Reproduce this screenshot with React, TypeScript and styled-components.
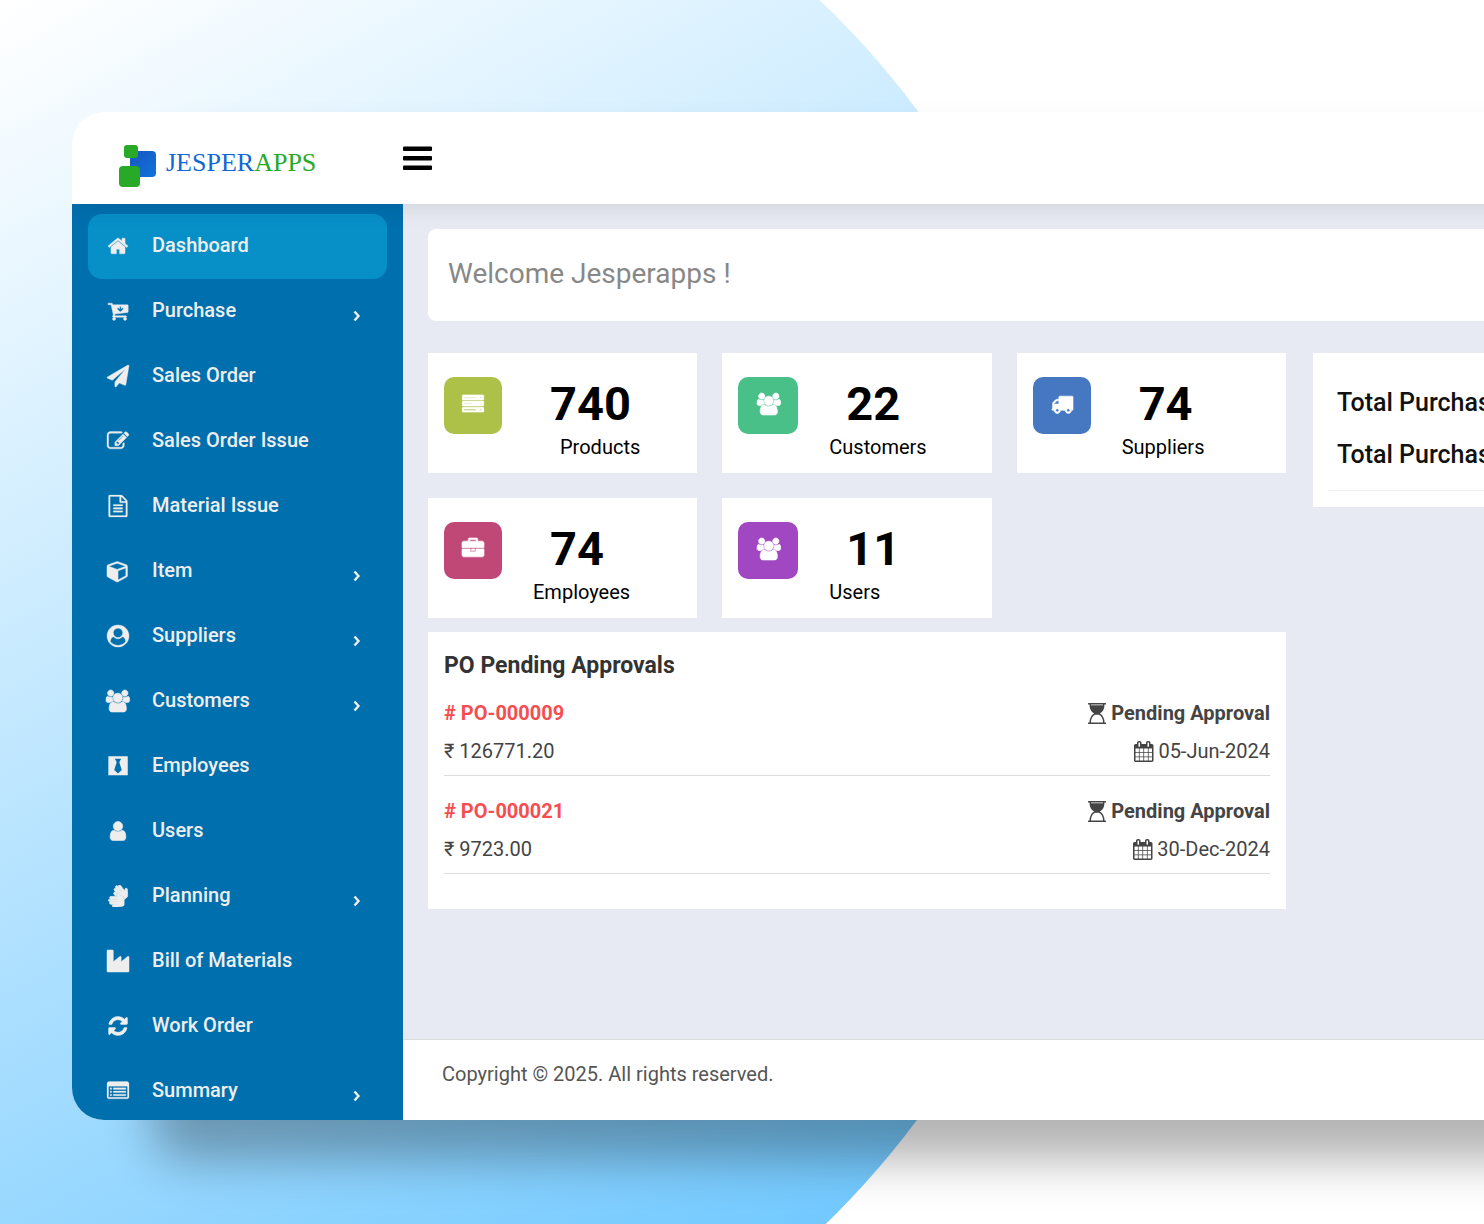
import React from "react";
import styled, { createGlobalStyle } from "styled-components";
import { FaSignLanguage } from "react-icons/fa";

const GlobalStyle = createGlobalStyle`
  * { box-sizing: border-box; }
  html, body { margin: 0; overflow: hidden; }
  body {
    font-family: Roboto, "Liberation Sans", sans-serif;
    font-size: 20px;
    color: #444;
    background: #fff;
  }
  h1, h2, p, ul, dl, dd { margin: 0; padding: 0; }
  ul { list-style: none; }
  a { color: inherit; text-decoration: none; }
`;

/* ---------- icons ---------- */

type Glyph = { box: string; d: string; weight?: number };

const glyphs: Record<string, Glyph> = {
  home: {
    box: "0 0 1792 1792",
    weight: 30,
    d: "M1472 992v480q0 26-19 45t-45 19h-384v-384h-256v384h-384q-26 0-45-19t-19-45v-480q0-1 .5-3t.5-3l575-474 575 474q1 2 1 6zm223-69l-62 74q-8 9-21 11h-3q-13 0-21-7l-692-577-692 577q-12 8-24 7-13-2-21-11l-62-74q-8-10-7-23.500t11-21.500l719-599q32-26 76-26t76 26l244 204v-195q0-14 9-23t23-9h192q14 0 23 9t9 23v408l219 182q10 8 11 21.500t-7 23.500z",
  },
  cart: {
    box: "0 0 1792 1792",
    weight: 30,
    d: "M704 1536q0 52-38 90t-90 38-90-38-38-90 38-90 90-38 90 38 38 90zm896 0q0 52-38 90t-90 38-90-38-38-90 38-90 90-38 90 38 38 90zM1728 448v512q0 24-16.500 42.500t-40.500 21.500l-1044 122q13 60 13 70 0 16-24 64h920q26 0 45 19t19 45-19 45-45 19h-1024q-26 0-45-19t-19-45q0-11 8-31.500t16-36 21.500-40 15.500-29.500l-177-823h-204q-26 0-45-19t-19-45 19-45 45-19h256q16 0 28.500 6.500t19.500 15.500 13 24.500 8 26 5.500 29.500 4.500 26h1201q26 0 45 19t19 45zM1344 704q0-26-19-45t-45-19-45 19l-83 82v-165q0-26-19-45t-45-19-45 19-19 45v165l-83-82q-19-19-45-19t-45 19-19 45 19 45l192 192q19 19 45 19t45-19l192-192q19-19 19-45z",
  },
  plane: {
    box: "0 0 1792 1792",
    weight: 30,
    d: "M1764 11q33 24 27 64l-256 1536q-5 29-32 45-14 8-31 8-11 0-24-5l-453-185-242 295q-18 23-49 23-13 0-22-4-19-7-30.500-23.500t-11.500-36.500v-349l864-1059-1069 925-395-162q-37-14-40-55-2-40 32-59l1664-960q15-9 32-9 20 0 36 11z",
  },
  edit: {
    box: "0 0 1792 1792",
    weight: 30,
    d: "M888 1184l116-116-152-152-116 116v56h96v96h56zm440-720q-16-16-33 1l-350 350q-17 17-1 33t33-1l350-350q17-17 1-33zm80 594v190q0 119-84.500 203.500t-203.500 84.500h-832q-119 0-203.500-84.500t-84.500-203.500v-832q0-119 84.500-203.500t203.500-84.500h832q63 0 117 25 15 7 18 23 3 17-9 29l-49 49q-14 14-32 8-23-6-45-6h-832q-66 0-113 47t-47 113v832q0 66 47 113t113 47h832q66 0 113-47t47-113v-126q0-13 9-22l64-64q15-15 35-7t20 29zm-96-738l288 288-672 672h-288v-288zm444 132l-92 92-288-288 92-92q28-28 68-28t68 28l152 152q28 28 28 68t-28 68z",
  },
  file: {
    box: "0 0 1792 1792",
    weight: 20,
    d: "M1596 380q28 28 48 76t20 88v1152q0 40-28 68t-68 28h-1344q-40 0-68-28t-28-68v-1600q0-40 28-68t68-28h896q40 0 88 20t76 48zm-444-244v376h376q-10-29-22-41l-313-313q-12-12-41-22zm384 1528v-1024h-416q-40 0-68-28t-28-68v-416h-768v1536h1280zm-1024-864q0-14 9-23t23-9h704q14 0 23 9t9 23v64q0 14-9 23t-23 9h-704q-14 0-23-9t-9-23v-64zm736 224q14 0 23 9t9 23v64q0 14-9 23t-23 9h-704q-14 0-23-9t-9-23v-64q0-14 9-23t23-9h704zm0 256q14 0 23 9t9 23v64q0 14-9 23t-23 9h-704q-14 0-23-9t-9-23v-64q0-14 9-23t23-9h704z",
  },
  cube: {
    box: "0 0 1792 1792",
    weight: 40,
    d: "M896 1629l640-349v-636l-640 233v752zm-64-865l698-254-698-254-698 254zm832-252v768q0 35-18 65t-49 47l-704 384q-28 16-61 16t-61-16l-704-384q-31-17-49-47t-18-65v-768q0-40 23-73t61-47l704-256q22-8 44-8t44 8l704 256q38 14 61 47t23 73z",
  },
  account: {
    box: "0 0 1792 1792",
    weight: 30,
    d: "M1523 1339q-22-155-87.500-257.500t-184.500-118.500q-67 74-159.500 115.500t-195.500 41.500-195.500-41.500-159.500-115.500q-119 16-184.500 118.500t-87.500 257.500q106 150 271 237.500t356 87.500 356-87.500 271-237.500zm-243-699q0-159-112.500-271.500t-271.500-112.500-271.500 112.500-112.500 271.500 112.500 271.500 271.500 112.500 271.500-112.500 112.500-271.500zm512 256q0 182-71 347.500t-190.500 286-285.500 191.500-349 71-348-71-286-191-191-286-71-348 71-348 191-286 286-191 348-71 348 71 286 191 191 286 71 348z",
  },
  group: {
    box: "0 0 1920 1792",
    weight: 50,
    d: "M593 896q-162 5-265 128h-134q-82 0-138-40.500t-56-118.500q0-353 124-353 6 0 43.500 21t97.500 42.500 119 21.500q67 0 133-23-5 37-5 66 0 159 93 256zm1071 637q0 120-73 189.500t-194 69.500h-874q-121 0-194-69.500t-73-189.500q0-53 3.500-103.500t14-109 26.500-108.500 43-97.500 62-81 85.500-53.500 111.500-20q10 0 43 21.500t73 48 107 48 135 21.500 135-21.500 107-48 73-48 43-21.500q61 0 111.500 20t85.500 53.500 62 81 43 97.500 26.500 108.500 14 109 3.500 103.500zm-1024-1277q0 106-75 181t-181 75-181-75-75-181 75-181 181-75 181 75 75 181zm704 384q0 159-112.500 271.500t-271.500 112.500-271.500-112.500-112.500-271.500 112.500-271.500 271.500-112.500 271.500 112.500 112.500 271.500zm576 225q0 78-56 118.500t-138 40.500h-134q-103-123-265-128 93-97 93-256 0-29-5-66 66 23 133 23 59 0 119-21.500t97.500-42.500 43.500-21q124 0 124 353zm-128-609q0 106-75 181t-181 75-181-75-75-181 75-181 181-75 181 75 75 181z",
  },
  tie: {
    box: "0 0 1792 1792",
    d: "M110 110h1580v1540h-1580zM640 300h512l-150 290 200 640-306 270-306-270 200-640z",
  },
  user: {
    box: "0 0 1792 1792",
    weight: 50,
    d: "M1536 1399q0 109-62.500 187t-150.500 78h-854q-88 0-150.500-78t-62.500-187q0-85 8.500-160.500t31.500-152 58.500-131 94-89 134.500-34.500q131 128 313 128t313-128q76 0 134.500 34.500t94 89 58.500 131 31.500 152 8.500 160.500zm-256-887q0 159-112.500 271.500t-271.500 112.500-271.500-112.500-112.500-271.500 112.500-271.500 271.500-112.500 271.500 112.500 112.500 271.500z",
  },
  industry: {
    box: "64 0 1792 1792",
    weight: 40,
    d: "M512 0q26 0 45 19t19 45v891l536-429q17-14 40-14 26 0 45 19t19 45v379l536-429q17-14 40-14 26 0 45 19t19 45v1152q0 26-19 45t-45 19h-1664q-26 0-45-19t-19-45v-1664q0-26 19-45t45-19h384z",
  },
  refresh: {
    box: "0 0 1792 1792",
    weight: 40,
    d: "M1639 1056q0 5-1 7-64 268-268 434.500t-478 166.500q-146 0-282.500-55t-243.500-157l-129 129q-19 19-45 19t-45-19-19-45v-448q0-26 19-45t45-19h448q26 0 45 19t19 45-19 45l-137 137q71 66 161 102t187 36q134 0 250-65t186-179q11-17 53-117 8-23 30-23h192q13 0 22.500 9.500t9.500 22.500zm25-800v448q0 26-19 45t-45 19h-448q-26 0-45-19t-19-45 19-45l138-138q-148-137-349-137-134 0-250 65t-186 179q-11 17-53 117-8 23-30 23h-199q-13 0-22.500-9.500t-9.500-22.500v-7q65-268 270-434.500t480-166.500q146 0 284 55.500t245 156.500l130-129q19-19 45-19t45 19 19 45z",
  },
  list: {
    box: "0 0 1792 1792",
    weight: 20,
    d: "M256 640h128v128h-128zM256 896h128v128h-128zM256 1152h128v128h-128zM512 640h1024v128h-1024zM512 896h1024v128h-1024zM512 1152h1024v128h-1024zM1664 1376v-832q0-13-9.500-22.500t-22.500-9.500h-1472q-13 0-22.500 9.500t-9.500 22.500v832q0 13 9.500 22.500t22.500 9.500h1472q13 0 22.500-9.500t9.500-22.500zm128-1088v1088q0 66-47 113t-113 47h-1472q-66 0-113-47t-47-113v-1088q0-66 47-113t113-47h1472q66 0 113 47t47 113z",
  },
  server: {
    box: "0 0 1792 1792",
    weight: 50,
    d: "M64 160h1664q40 0 40 40v320q0 40-40 40h-1664q-40 0-40-40v-320q0-40 40-40zM160 330h960v56h-960zM1480 310h90v90h-90zM64 660h1664q40 0 40 40v320q0 40-40 40h-1664q-40 0-40-40v-320q0-40 40-40zM160 836h640v56h-640zM1480 816h90v90h-90zM64 1170h1664q40 0 40 40v300q0 40-40 40h-1664q-40 0-40-40v-300q0-40 40-40zM160 1310h960v110h-960zM1460 1310h120v110h-120z",
  },
  truck: {
    box: "0 0 1792 1792",
    weight: 50,
    d: "M640 1408q0-52-38-90t-90-38-90 38-38 90 38 90 90 38 90-38 38-90zm-384-512h384v-256h-158q-13 0-22 9l-195 195q-9 9-9 22v30zm1280 512q0-52-38-90t-90-38-90 38-38 90 38 90 90 38 90-38 38-90zm256-1088v1024q0 15-4 26.500t-13.500 18.500-16.500 11.500-23.500 6-22.500 2-25.500 0-22.500-.5q0 106-75 181t-181 75-181-75-75-181h-384q0 106-75 181t-181 75-181-75-75-181h-64q-3 0-22.500.5t-25.500 0-22.500-2-23.500-6-16.500-11.500-13.500-18.500-4-26.500q0-26 19-45t45-19v-320q0-8-.5-35t0-38 2.500-34.500 6.500-37 14-30.500 22.500-30l198-198q19-19 50.500-32t58.500-13h160v-192q0-26 19-45t45-19h1024q26 0 45 19t19 45z",
  },
  briefcase: {
    box: "0 0 1792 1792",
    weight: 50,
    d: "M640 256h512v-128h-512v128zm1152 640v480q0 66-47 113t-113 47h-1472q-66 0-113-47t-47-113v-480h672v160q0 26 19 45t45 19h320q26 0 45-19t19-45v-160h672zm-768 0v128h-256v-128h256zm768-480v384h-1792v-384q0-66 47-113t113-47h352v-160q0-40 28-68t68-28h576q40 0 68 28t28 68v160h352q66 0 113 47t47 113z",
  },
  hourglass: {
    box: "0 0 1536 1792",
    d: "M32 0h1472q32 0 32 32v64q0 32-32 32h-96q0 280-110 480t-290 288q180 88 290 288t110 480h96q32 0 32 32v64q0 32-32 32h-1472q-32 0-32-32v-64q0-32 32-32h96q0-280 110-480t290-288q-180-88-290-288t-110-480h-96q-32 0-32-32v-64q0-32 32-32zM256 1664h1024q0-260-98-430t-254-234h-320q-156 64-254 234t-98 430zM256 128h1024v60h-1024z",
  },
  calendar: {
    box: "64 0 1664 1792",
    d: "M192 1664h288v-288h-288v288zm352 0h320v-288h-320v288zm-352-352h288v-320h-288v320zm352 0h320v-320h-320v320zm-352-384h288v-288h-288v288zm736 736h320v-288h-320v288zm-384-736h320v-288h-320v288zm768 736h288v-288h-288v288zm-384-352h320v-320h-320v320zm-352-864v-288q0-13-9.500-22.500t-22.500-9.500h-64q-13 0-22.500 9.500t-9.500 22.500v288q0 13 9.500 22.500t22.500 9.500h64q13 0 22.500-9.500t9.500-22.500zm736 864h288v-320h-288v320zm-384-384h320v-288h-320v288zm384 0h288v-288h-288v288zm32-480v-288q0-13-9.500-22.500t-22.500-9.500h-64q-13 0-22.500 9.500t-9.500 22.500v288q0 13 9.500 22.500t22.500 9.500h64q13 0 22.500-9.500t9.500-22.500zm384-64v1280q0 52-38 90t-90 38h-1408q-52 0-90-38t-38-90v-1280q0-52 38-90t90-38h128v-96q0-66 47-113t113-47h64q66 0 113 47t47 113v96h384v-96q0-66 47-113t113-47h64q66 0 113 47t47 113v96h128q52 0 90 38t38 90z",
  },
};

function Icon({ name, size }: { name: string; size: number }) {
  if (name === "hands") {
    return <FaSignLanguage size={size} stroke="currentColor" strokeWidth={16} aria-hidden="true" />;
  }
  const g = glyphs[name];
  return (
    <svg
      height={size}
      viewBox={g.box}
      fill="currentColor"
      stroke="currentColor"
      strokeWidth={g.weight ?? 0}
      overflow="visible"
      aria-hidden="true"
    >
      <path fillRule="evenodd" d={g.d} />
    </svg>
  );
}

/* ---------- page frame ---------- */

const Page = styled.div`
  position: relative;
  height: 100vh;
  padding: 112px 0 104px 72px;
  overflow: hidden;
`;

const Backdrop = styled.div`
  position: absolute;
  left: -610px;
  top: -232px;
  width: 1694px;
  height: 1694px;
  border-radius: 50%;
  background: linear-gradient(151deg, #ffffff 22%, #74caff 85%);
`;

const Window = styled.div`
  position: relative;
  display: flex;
  flex-direction: column;
  width: calc(100% + 269px);
  height: 100%;
  border-radius: 32px;
  overflow: hidden;
  background: #fff;
  box-shadow: 80px 40px 48px rgba(0, 0, 0, 0.3);
`;

const TopBar = styled.header`
  position: relative;
  z-index: 1;
  display: flex;
  flex: none;
  align-items: center;
  height: 92px;
  background: #fff;
  box-shadow: 0 0 24px rgba(0, 0, 0, 0.12);
`;

const Brand = styled.a`
  display: flex;
  align-items: center;
  gap: 10px;
  width: 331px;
  padding: 16px 0 0 46px;
`;

const BrandName = styled.span`
  padding-bottom: 6px;
  font-family: "Liberation Serif", serif;
  font-size: 26px;
  line-height: 36px;
  color: #1268d3;
`;

const BrandAccent = styled.span`
  color: #28a928;
`;

const MenuButton = styled.button`
  display: flex;
  padding: 0;
  border: 0;
  background: none;
  color: #000;
  cursor: pointer;
`;

const Body = styled.div`
  display: flex;
  flex: 1;
  min-height: 0;
`;

/* ---------- sidebar ---------- */

const Sidebar = styled.nav`
  flex: none;
  width: 331px;
  padding: 10px 16px 0;
  overflow: hidden;
  background: #006fae;
`;

const NavLink = styled.a<{ $active?: boolean }>`
  display: flex;
  align-items: center;
  height: 65px;
  padding: 0 24px 4px 18px;
  border-radius: 14px;
  background: ${(p) => (p.$active ? "#078fc7" : "transparent")};
  color: #eeeeee;
  font-size: 20px;
  font-weight: 500;
`;

const NavIcon = styled.span`
  display: flex;
  justify-content: center;
  width: 24px;
  margin-right: 22px;
  padding-top: 2px;
`;

const NavLabel = styled.span`
  flex: 1;
`;

const NavArrow = styled.span`
  display: flex;
  padding: 12px 2px 0 0;
`;

/* ---------- content ---------- */

const Main = styled.div`
  display: flex;
  flex: 1;
  flex-direction: column;
  min-width: 0;
  background: #e7eaf3;
`;

const Content = styled.main`
  flex: 1;
  padding: 25px;
`;

const Welcome = styled.h1`
  margin-bottom: 32px;
  padding: 25px 20px 27px;
  border-radius: 8px;
  background: #fff;
  color: #888;
  font-size: 28px;
  font-weight: 400;
  line-height: 40px;
`;

const Columns = styled.div`
  display: grid;
  grid-template-columns: 66% 1fr;
  align-items: start;
  gap: 27px;
`;

const Cards = styled.div`
  display: grid;
  grid-template-columns: repeat(3, 1fr);
  gap: 25px;
  margin-bottom: 14px;
`;

const Card = styled.section`
  display: flex;
  gap: 31px;
  padding: 24px 16px 10px;
  background: #fff;
  color: #000;
`;

const Tile = styled.div<{ $color: string; $wide?: boolean }>`
  display: flex;
  align-items: center;
  justify-content: center;
  width: ${(p) => (p.$wide ? 60 : 58)}px;
  height: 57px;
  padding-bottom: 4px;
  border-radius: 10px;
  background: ${(p) => p.$color};
  color: #fff;
`;

const CardText = styled.div`
  display: flex;
  flex-direction: column;
`;

const CardNumber = styled.strong`
  padding-left: 17px;
  font-size: 47px;
  font-weight: 700;
  line-height: 54px;
`;

const CardLabel = styled.span<{ $indent?: boolean }>`
  padding-left: ${(p) => (p.$indent ? 27 : 0)}px;
  font-size: 20px;
  line-height: 32px;
`;

const Panel = styled.section`
  padding: 16px 16px 19px;
  background: #fff;
`;

const PanelTitle = styled.h2`
  margin-bottom: 10px;
  color: #333;
  font-size: 23px;
  font-weight: 700;
  line-height: 36px;
`;

const Order = styled.li`
  margin-bottom: 16px;
  padding-bottom: 5px;
  border-bottom: 1px solid #dcdcdc;
`;

const OrderLine = styled.div<{ $strong?: boolean }>`
  display: flex;
  justify-content: space-between;
  font-size: 20px;
  font-weight: ${(p) => (p.$strong ? 700 : 400)};
  line-height: 38px;
`;

const OrderLink = styled.a`
  color: #f64e50;
`;

const WithIcon = styled.span`
  display: flex;
  align-items: center;
  gap: 5px;
`;

const Totals = styled.section`
  padding: 24px 16px 16px;
  background: #fff;
  color: #111;
`;

const TotalLines = styled.div`
  padding: 0 8px 9px;
  border-bottom: 1px solid #f3ecee;
  font-size: 25px;
  font-weight: 500;
  line-height: 52px;
`;

const Footer = styled.footer`
  padding: 18px 39px 30px;
  border-top: 1px solid #dcdcdc;
  background: #fff;
  color: #555;
  font-size: 20px;
  line-height: 32px;
`;

/* ---------- data ---------- */

const navItems = [
  { label: "Dashboard", icon: "home", active: true },
  { label: "Purchase", icon: "cart", more: true },
  { label: "Sales Order", icon: "plane" },
  { label: "Sales Order Issue", icon: "edit" },
  { label: "Material Issue", icon: "file" },
  { label: "Item", icon: "cube", more: true },
  { label: "Suppliers", icon: "account", more: true },
  { label: "Customers", icon: "group", more: true },
  { label: "Employees", icon: "tie" },
  { label: "Users", icon: "user" },
  { label: "Planning", icon: "hands", more: true },
  { label: "Bill of Materials", icon: "industry" },
  { label: "Work Order", icon: "refresh" },
  { label: "Summary", icon: "list", more: true },
];

const cards = [
  { value: 740, label: "Products", icon: "server", color: "#adc148", indent: true },
  { value: 22, label: "Customers", icon: "group", color: "#48c088", wide: true },
  { value: 74, label: "Suppliers", icon: "truck", color: "#4677c1" },
  { value: 74, label: "Employees", icon: "briefcase", color: "#c04877" },
  { value: 11, label: "Users", icon: "group", color: "#a147c1", wide: true },
];

const orders = [
  { id: "PO-000009", amount: "126771.20", date: "05-Jun-2024" },
  { id: "PO-000021", amount: "9723.00", date: "30-Dec-2024" },
];

export default function App() {
  return (
    <>
      <GlobalStyle />
      <Page>
        <Backdrop />
        <Window>
          <TopBar>
            <Brand href="#">
              <svg width="38" height="44" viewBox="0 0 38 44" aria-hidden="true">
                <defs>
                  <linearGradient id="brandBlue" x1="0" y1="0" x2="1" y2="1">
                    <stop offset="0" stopColor="#1a55c0" />
                    <stop offset="1" stopColor="#0f74dc" />
                  </linearGradient>
                </defs>
                <rect x="12" y="7" width="26" height="26" rx="4" fill="url(#brandBlue)" />
                <rect x="6" y="1" width="14" height="13" rx="3" fill="#28a928" />
                <rect x="1" y="22" width="21" height="21" rx="4" fill="#28a928" />
              </svg>
              <BrandName>
                JESPER<BrandAccent>APPS</BrandAccent>
              </BrandName>
            </Brand>
            <MenuButton type="button" aria-label="Toggle menu">
              <svg width="30" height="24" viewBox="0 0 30 24" fill="currentColor" aria-hidden="true">
                <rect y="0.500" width="29" height="4.500" rx="1" />
                <rect y="10" width="29" height="4.500" rx="1" />
                <rect y="19.500" width="29" height="4.500" rx="1" />
              </svg>
            </MenuButton>
          </TopBar>
          <Body>
            <Sidebar>
              {navItems.map((item) => (
                <NavLink key={item.label} href="#" $active={item.active}>
                  <NavIcon>
                    <Icon name={item.icon} size={22} />
                  </NavIcon>
                  <NavLabel>{item.label}</NavLabel>
                  {item.more && (
                    <NavArrow>
                      <svg width="8" height="12" viewBox="0 0 8 12" fill="none" stroke="currentColor" strokeWidth="2.400" aria-hidden="true">
                        <path d="M1.500 1.500L5.500 6L1.500 10.500" />
                      </svg>
                    </NavArrow>
                  )}
                </NavLink>
              ))}
            </Sidebar>
            <Main>
              <Content>
                <Welcome>Welcome Jesperapps !</Welcome>
                <Columns>
                  <div>
                    <Cards>
                      {cards.map((card) => (
                        <Card key={card.label}>
                          <Tile $color={card.color} $wide={card.wide}>
                            <Icon name={card.icon} size={22} />
                          </Tile>
                          <CardText>
                            <CardNumber>{card.value}</CardNumber>
                            <CardLabel $indent={card.indent}>{card.label}</CardLabel>
                          </CardText>
                        </Card>
                      ))}
                    </Cards>
                    <Panel>
                      <PanelTitle>PO Pending Approvals</PanelTitle>
                      <ul>
                        {orders.map((order) => (
                          <Order key={order.id}>
                            <OrderLine $strong>
                              <OrderLink href="#"># {order.id}</OrderLink>
                              <WithIcon>
                                <Icon name="hourglass" size={21} />
                                Pending Approval
                              </WithIcon>
                            </OrderLine>
                            <OrderLine>
                              <span>₹ {order.amount}</span>
                              <WithIcon>
                                <Icon name="calendar" size={21} />
                                {order.date}
                              </WithIcon>
                            </OrderLine>
                          </Order>
                        ))}
                      </ul>
                    </Panel>
                  </div>
                  <Totals>
                    <TotalLines>
                      <p>Total Purchase</p>
                      <p>Total Purchase</p>
                    </TotalLines>
                  </Totals>
                </Columns>
              </Content>
              <Footer>Copyright © 2025. All rights reserved.</Footer>
            </Main>
          </Body>
        </Window>
      </Page>
    </>
  );
}
